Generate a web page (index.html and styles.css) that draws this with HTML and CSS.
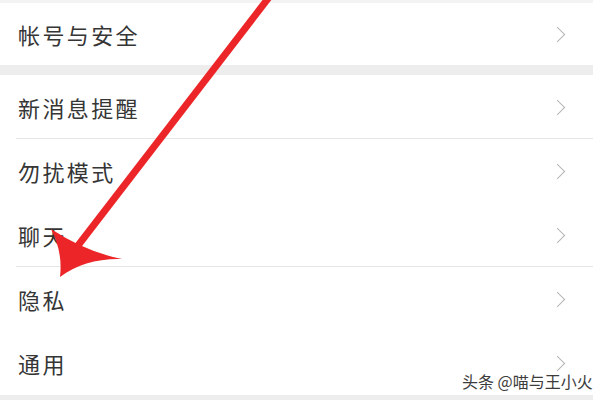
FILE: index.html
```html
<!DOCTYPE html>
<html lang="zh-CN">
  <head>
    <meta charset="UTF-8" />
    <meta name="viewport" content="width=device-width, initial-scale=1.0" />
    <title>设置</title>
    <link rel="stylesheet" href="styles.css">
  </head>
  <body>
    <div class="page">
      <div class="strip top"></div>
      <div class="group">
        <div class="row first"><span class="label">帐号与安全</span><span class="chev"></span></div>
      </div>
      <div class="strip gap"></div>
      <div class="group">
        <div class="row line"><span class="label">新消息提醒</span><span class="chev"></span></div>
        <div class="row"><span class="label">勿扰模式</span><span class="chev"></span></div>
        <div class="row line"><span class="label">聊天</span><span class="chev"></span></div>
        <div class="row"><span class="label">隐私</span><span class="chev"></span></div>
        <div class="row"><span class="label">通用</span><span class="chev"></span></div>
      </div>
      <div class="strip bottom"></div>

      <svg class="arrow" width="600" height="400" viewBox="0 0 600 400">
        <line x1="270" y1="-4" x2="70" y2="256" stroke="#ec2628" stroke-width="7" />
        <path d="M60 277 Q63 252 51 229 Q86 252 122 259 Q85 258 60 277 Z" fill="#ec2628" />
      </svg>
      <div class="mark">头条 @喵与王小火</div>
    </div>
  </body>
</html>
```

FILE: styles.css
```css
body {
  margin: 0;
  background: #fff;
  font-family: "Noto Sans CJK SC", "Noto Sans", sans-serif;
}

.page {
  position: relative;
  width: 593px;
  height: 400px;
  overflow: hidden;
}

.strip {
  background: #ededed;
}

.strip.top {
  height: 3px;
  background: #f3f3f3;
}

.strip.gap {
  height: 10px;
}

.strip.bottom {
  height: 10px;
}

.group {
  background: #fff;
}

.row {
  position: relative;
  height: 64px;
  display: flex;
  align-items: center;
  justify-content: space-between;
  padding: 0 26px 0 18px;
}

.row.first {
  height: 62px;
}

.row.line::after {
  content: "";
  position: absolute;
  left: 16px;
  right: 0;
  bottom: 0;
  height: 1px;
  background: #e6e6e6;
}

.label {
  font-size: 22px;
  letter-spacing: 2.4px;
  color: #353535;
}

.chev {
  width: 10px;
  height: 10px;
  border-top: 1.5px solid #b4b4b4;
  border-right: 1.5px solid #b4b4b4;
  transform: rotate(45deg);
  margin-right: 4px;
}

.arrow {
  position: absolute;
  left: 0;
  top: 0;
  pointer-events: none;
}

.mark {
  position: absolute;
  left: 462px;
  top: 369px;
  font-size: 16px;
  color: #3c3c3c;
  text-shadow: 0 0 2px #fff, 0 0 2px #fff;
}
```
